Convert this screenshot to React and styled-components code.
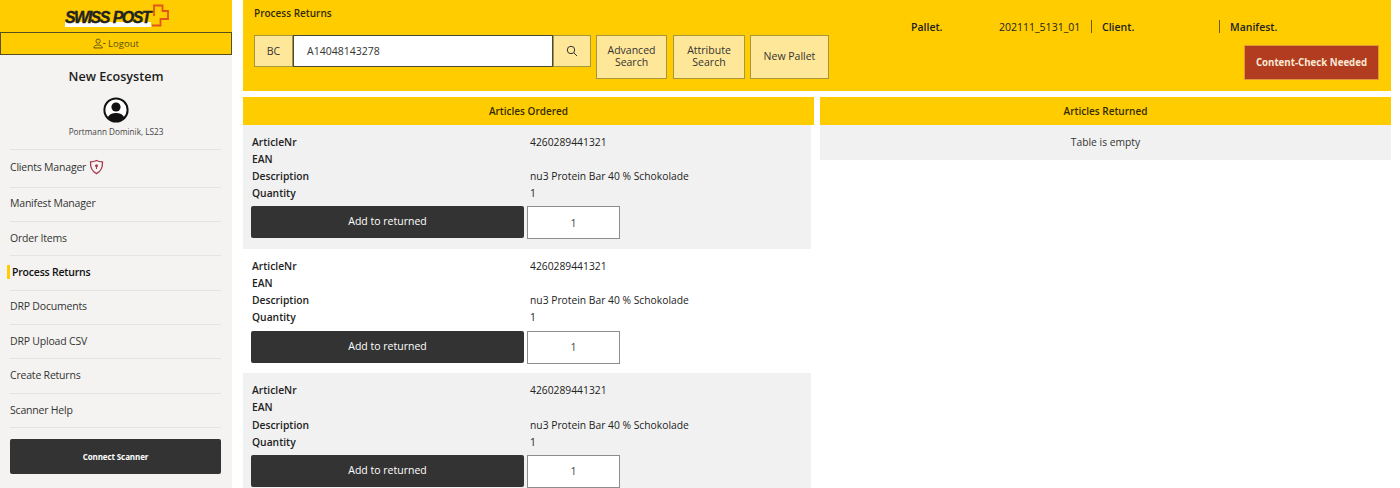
import React from 'react'
import styled, { createGlobalStyle } from 'styled-components'

const GlobalStyle = createGlobalStyle`
    html, body {
        margin: 0;
        padding: 0;
        background: #fff;
        font-family: "Open Sans", "Noto Sans", sans-serif;
        color: #222;
    }
    * { box-sizing: border-box; }
`

const Page = styled.div`
    width: 1400px;
    height: 488px;
    overflow: hidden;
    display: flex;
`

const Sidebar = styled.aside`
    width: 232px;
    height: 488px;
    background: #f4f3f1;
    flex-shrink: 0;
    display: flex;
    flex-direction: column;
`

const LogoBar = styled.div`
    height: 32px;
    background: #ffcc00;
    display: flex;
    justify-content: center;
    align-items: center;
    padding-bottom: 2px;
    padding-left: 2px;
`

const LogoText = styled.span`
    font-family: "Liberation Sans", sans-serif;
    font-size: 16px;
    font-weight: 700;
    font-style: italic;
    letter-spacing: -1.55px;
    word-spacing: 1px;
    -webkit-text-stroke: 0.35px #222;
    color: #222;
    background: linear-gradient(to bottom, transparent 72%, #fff 72%);
    line-height: 18px;
    padding-right: 1px;
    margin-top: 5px;
`

const LogoutBar = styled.div`
    height: 23px;
    background: #ffcc00;
    border: 1px solid #57501c;
    display: flex;
    justify-content: center;
    align-items: center;
    gap: 2px;
    font-size: 9.5px;
    color: #55500f;
`

const AppTitle = styled.div`
    margin-top: 13px;
    text-align: center;
    font-size: 12.6px;
    font-weight: 600;
    line-height: 18px;
    color: #1c1c1c;
`

const Avatar = styled.div`
    margin-top: 11px;
    display: flex;
    justify-content: center;
`

const UserName = styled.div`
    margin-top: 3px;
    text-align: center;
    font-size: 8.2px;
    line-height: 12px;
    color: #444;
`

const Nav = styled.nav`
    margin: 11px 11px 0 10px;
    border-top: 1px solid #e4e3e1;
`

const NavItem = styled.div`
    height: ${props => props.$tall ? '37.5px' : '34.4px'};
    border-bottom: 1px solid #e4e3e1;
    padding-bottom: 2px;
    display: flex;
    align-items: center;
    gap: 3px;
    font-size: 10.5px;
    letter-spacing: -0.2px;
    color: ${props => props.$active ? '#111' : '#333'};
    font-weight: ${props => props.$active ? 600 : 400};
    padding-left: ${props => props.$active ? '2px' : '0'};
    position: relative;
    &::before {
        content: '';
        display: ${props => props.$active ? 'block' : 'none'};
        position: absolute;
        left: -3px;
        top: 9px;
        height: 14px;
        width: 3px;
        background: #ffcc00;
    }
`

const ConnectButton = styled.button`
    margin: 11px 11px 0 10px;
    height: 35px;
    background: #333;
    border: none;
    border-radius: 2px;
    color: #fff;
    font-family: inherit;
    font-size: 8px;
    letter-spacing: -0.1px;
    font-weight: 700;
`

const Main = styled.main`
    width: 1148px;
    margin-left: 11px;
    display: flex;
    flex-direction: column;
    gap: 6px;
`

const TopPanel = styled.section`
    height: 91px;
    flex-shrink: 0;
    background: #ffcc00;
    display: flex;
    justify-content: space-between;
    padding: 6px 12px 0 11px;
`

const TopLeft = styled.div`
    display: flex;
    flex-direction: column;
`

const PanelTitle = styled.div`
    font-size: 10px;
    font-weight: 600;
    line-height: 14px;
    color: #332b00;
`

const SearchRow = styled.div`
    margin-top: 15px;
    display: flex;
    align-items: flex-start;
`

const Addon = styled.div`
    width: ${props => props.$w}px;
    height: 32px;
    background: #ffe79a;
    border: 1px solid #a8963c;
    display: flex;
    justify-content: center;
    align-items: center;
    font-size: 10.5px;
    color: #333;
`

const SearchInput = styled.div`
    width: 260px;
    height: 32px;
    background: #fff;
    border: 1px solid #4a4a3a;
    padding-left: 13px;
    display: flex;
    align-items: center;
    font-size: 10.5px;
    color: #333;
`

const ActionButton = styled.div`
    width: ${props => props.$w}px;
    height: 44px;
    margin-left: ${props => props.$gap}px;
    background: #ffe79a;
    border: 1px solid #a8963c;
    padding-bottom: 2px;
    display: flex;
    justify-content: center;
    align-items: center;
    text-align: center;
    font-size: 10.5px;
    line-height: 12px;
    color: #333;
`

const TopRight = styled.div`
    display: flex;
    flex-direction: column;
    align-items: flex-end;
    padding-top: 14px;
`

const MetaRow = styled.div`
    width: 468px;
    display: flex;
    font-size: 10.5px;
    line-height: 14px;
    color: #222;
`

const MetaLabel = styled.span`
    font-weight: 600;
    width: ${props => props.$w}px;
`

const MetaValue = styled.span`
    width: 92px;
    white-space: nowrap;
`

const MetaSep = styled.span`
    width: 1px;
    height: 13px;
    background: #6a5d10;
    margin-right: 10px;
`

const CheckButton = styled.div`
    margin-top: 11px;
    width: 135px;
    height: 35px;
    background: #b23c1f;
    border: 1px solid #dd9a3a;
    display: flex;
    justify-content: center;
    align-items: center;
    color: #fbe9d6;
    font-size: 9.7px;
    font-weight: 700;
`

const Columns = styled.div`
    display: flex;
    gap: 6px;
`

const Column = styled.section`
    width: 571px;
`

const ColumnHeader = styled.div`
    height: 28px;
    background: #ffcc00;
    display: flex;
    justify-content: center;
    align-items: center;
    font-size: 10px;
    font-weight: 600;
    color: #332b00;
`

const Article = styled.div`
    width: 568px;
    height: 124.2px;
    background: ${props => props.$shaded ? '#f1f1f1' : '#fff'};
    padding: 9px 8px 0 9px;
`

const InfoLine = styled.div`
    display: flex;
    height: 17.1px;
    font-size: 10.3px;
    line-height: 17px;
    color: #222;
`

const InfoLabel = styled.span`
    width: 278px;
    font-weight: 600;
`

const AddRow = styled.div`
    margin-top: 4px;
    margin-left: -1px;
    display: flex;
    gap: 3px;
`

const AddButton = styled.div`
    width: 273px;
    height: 32px;
    background: #333;
    border-radius: 2px;
    color: #fff;
    display: flex;
    justify-content: center;
    align-items: center;
    padding-bottom: 2px;
    font-size: 10.5px;
`

const QtyBox = styled.div`
    width: 93px;
    height: 33px;
    background: #fff;
    border: 1px solid #8d8d8d;
    display: flex;
    justify-content: center;
    align-items: center;
    font-size: 10.5px;
    color: #444;
`

const EmptyRow = styled.div`
    height: 35px;
    background: #f1f1f1;
    padding-bottom: 2px;
    display: flex;
    justify-content: center;
    align-items: center;
    font-size: 10.3px;
    color: #333;
`

const menu = ['Manifest Manager', 'Order Items', 'Process Returns', 'DRP Documents', 'DRP Upload CSV', 'Create Returns', 'Scanner Help']

const SwissCross = () => (
    <svg width="18" height="23" viewBox="0 0 18 23" fill="none">
        <path d="M3 12V1.500H11.500V7H17V15H9.500V21.500H1" stroke="#e2551a" strokeWidth="1.800" />
    </svg>
)

const UserIcon = () => (
    <svg width="13" height="11" viewBox="0 0 14 11" fill="none" stroke="#55500f" strokeWidth="1">
        <circle cx="5.500" cy="3" r="2.300" />
        <path d="M1 10.300c0-2.200 1.800-3.200 4.500-3.200s4.500 1 4.500 3.200z" />
        <path d="M11 5.500h2.600" />
    </svg>
)

const AvatarIcon = () => (
    <svg width="26" height="26" viewBox="0 0 26 26">
        <circle cx="13" cy="13" r="11.600" fill="#fff" stroke="#111" strokeWidth="2" />
        <circle cx="13" cy="10" r="4.600" fill="#111" />
        <path d="M4.600 20.500c1.600-3.400 4.600-4.600 8.400-4.600s6.800 1.200 8.400 4.600c-2 2.400-5 3.800-8.400 3.800s-6.400-1.400-8.400-3.800z" fill="#111" />
    </svg>
)

const ShieldIcon = () => (
    <svg width="15" height="16" viewBox="0 0 15 16" fill="none">
        <path d="M7.500 1.500c1.800 1 3.800 1.400 6 1.400.3 5.300-1.700 9.600-6 11.800-4.300-2.200-6.300-6.500-6-11.800 2.200 0 4.200-.4 6-1.400z" stroke="#a8394c" strokeWidth="1.300" />
        <circle cx="7.500" cy="6.800" r="1.500" fill="#a8394c" />
        <path d="M7.500 7v3" stroke="#a8394c" strokeWidth="1" />
    </svg>
)

const SearchIcon = () => (
    <svg width="12" height="12" viewBox="0 0 12 12" fill="none" stroke="#333" strokeWidth="1">
        <circle cx="5" cy="5" r="3.700" />
        <path d="M7.700 7.700L11 11" />
    </svg>
)

const ArticleCard = ({ shaded }) => (
    <Article $shaded={shaded}>
        <InfoLine><InfoLabel>ArticleNr</InfoLabel>4260289441321</InfoLine>
        <InfoLine><InfoLabel>EAN</InfoLabel></InfoLine>
        <InfoLine><InfoLabel>Description</InfoLabel>nu3 Protein Bar 40 % Schokolade</InfoLine>
        <InfoLine><InfoLabel>Quantity</InfoLabel>1</InfoLine>
        <AddRow>
            <AddButton>Add to returned</AddButton>
            <QtyBox>1</QtyBox>
        </AddRow>
    </Article>
)

export default function App() {
    return (
        <Page>
            <GlobalStyle />
            <Sidebar>
                <LogoBar>
                    <LogoText>SWISS POST</LogoText>
                    <SwissCross />
                </LogoBar>
                <LogoutBar><UserIcon /> Logout</LogoutBar>
                <AppTitle>New Ecosystem</AppTitle>
                <Avatar><AvatarIcon /></Avatar>
                <UserName>Portmann Dominik, LS23</UserName>
                <Nav>
                    <NavItem $tall>Clients Manager <ShieldIcon /></NavItem>
                    {menu.map((item) =>
                        <NavItem key={item} $active={item === 'Process Returns'}>{item}</NavItem>
                    )}
                </Nav>
                <ConnectButton>Connect Scanner</ConnectButton>
            </Sidebar>
            <Main>
                <TopPanel>
                    <TopLeft>
                        <PanelTitle>Process Returns</PanelTitle>
                        <SearchRow>
                            <Addon $w={39}>BC</Addon>
                            <SearchInput>A14048143278</SearchInput>
                            <Addon $w={38}><SearchIcon /></Addon>
                            <ActionButton $w={71} $gap={5}>Advanced<br />Search</ActionButton>
                            <ActionButton $w={72} $gap={6}>Attribute<br />Search</ActionButton>
                            <ActionButton $w={79} $gap={5}>New Pallet</ActionButton>
                        </SearchRow>
                    </TopLeft>
                    <TopRight>
                        <MetaRow>
                            <MetaLabel $w={88}>Pallet.</MetaLabel>
                            <MetaValue>202111_5131_01</MetaValue>
                            <MetaSep />
                            <MetaLabel $w={117}>Client.</MetaLabel>
                            <MetaSep />
                            <MetaLabel $w={60}>Manifest.</MetaLabel>
                        </MetaRow>
                        <CheckButton>Content-Check Needed</CheckButton>
                    </TopRight>
                </TopPanel>
                <Columns>
                    <Column>
                        <ColumnHeader>Articles Ordered</ColumnHeader>
                        <ArticleCard shaded />
                        <ArticleCard />
                        <ArticleCard shaded />
                    </Column>
                    <Column>
                        <ColumnHeader>Articles Returned</ColumnHeader>
                        <EmptyRow>Table is empty</EmptyRow>
                    </Column>
                </Columns>
            </Main>
        </Page>
    )
}
